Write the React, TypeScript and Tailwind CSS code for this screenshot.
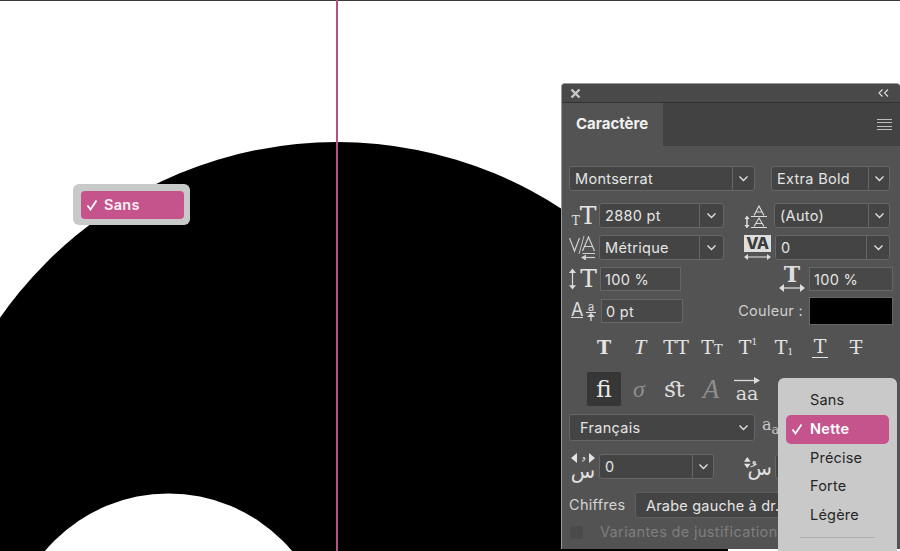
import React from 'react';

const FONT = { fontFamily: 'Inter, "Liberation Sans", Arial, sans-serif' };
const SERIF = { fontFamily: '"DejaVu Serif", "Liberation Serif", serif' };
const ITALIC = { fontFamily: '"Liberation Serif", serif' };
const ARABIC = { fontFamily: '"DejaVu Sans", sans-serif' };

const Chevron = () => (
  <svg width="11" height="7" viewBox="0 0 11 7" fill="none" stroke="#e0e0e0" strokeWidth="1.4">
    <path d="M1.5 1.5 5.5 5.5 9.5 1.5" />
  </svg>
);

const Check = () => (
  <svg width="12" height="12" viewBox="0 0 12 12" fill="none" stroke="#fff" strokeWidth="1.8">
    <path d="M1.5 6.5 4.5 10.5 10.5 1.5" />
  </svg>
);

const Combo = ({ value, width, arrow = 24 }: { value: string; width: number; arrow?: number }) => (
  <div
    className="flex h-[25px] shrink-0 rounded-[3px] border border-[#666] bg-[#444]"
    style={{ width }}
  >
    <div className="flex min-w-0 flex-1 items-center overflow-hidden whitespace-nowrap pl-[5px] pt-[1px] text-[14.5px] tracking-[0.3px] text-[#e4e4e4]">
      {value}
    </div>
    <div className="flex shrink-0 items-center justify-center border-l border-[#666]" style={{ width: arrow }}>
      <Chevron />
    </div>
  </div>
);

const Field = ({ value, width }: { value: string; width: number }) => (
  <div
    className="flex h-[24px] shrink-0 items-center border border-[#666] bg-[#484848] pl-[4px] pt-[1px] text-[14.5px] tracking-[0.3px] text-[#e4e4e4]"
    style={{ width }}
  >
    {value}
  </div>
);

const Glyph = ({ children, className = '' }: { children: React.ReactNode; className?: string }) => (
  <span style={SERIF} className={`flex w-[36px] justify-center text-[#e4e4e4] ${className}`}>
    {children}
  </span>
);

const IconSizeT = () => (
  <div style={SERIF} className="flex w-[28px] items-end justify-center leading-none text-[#e4e4e4]">
    <span className="text-[12px] leading-[12px]">T</span>
    <span className="text-[25px] leading-[22px]">T</span>
  </div>
);

const IconLeading = () => (
  <svg width="24" height="24" viewBox="0 0 24 24" fill="none" stroke="#dcdcdc" strokeWidth="1.1">
    <path d="M7 12.5h16M7 23.5h16" />
    <path d="M10 11.5 15 2l5 9.5M11.5 8h7M10 22.5 15 14l5 8.5M11.5 19.5h7" />
    <path d="M3 13v10" strokeWidth="1.5" />
    <path d="M.5 15 3 11.5 5.5 15M.5 21 3 24.5 5.5 21" fill="#dcdcdc" stroke="none" />
  </svg>
);

const IconKern = () => (
  <svg width="27" height="24" viewBox="0 0 27 24" fill="none" stroke="#d0d0d0">
    <path d="M.5 2 5.5 15 10.5 2" strokeWidth="1.2" />
    <path d="M10 18 15 0" strokeWidth=".9" />
    <path d="M13.5 15 19.5 1 25.5 15M15.5 10.5h8M13.5 17.5h12.5" strokeWidth="1.2" />
    <path d="M13 21.5h13" strokeWidth="1.2" />
    <path d="M12 21.5l5-3v6z" fill="#d0d0d0" stroke="none" />
  </svg>
);

const IconTrack = () => (
  <div className="flex w-[27px] flex-col items-center">
    <span className="flex h-[17px] w-[27px] items-center justify-center bg-[#dedede] text-[16px] font-extrabold leading-none tracking-[-0.5px] text-[#3c3c3c]">
      VA
    </span>
    <svg width="27" height="8" viewBox="0 0 27 8" fill="#dcdcdc" stroke="#dcdcdc" className="mt-[1px]">
      <path d="M2 4h23" strokeWidth="1.1" />
      <path d="M0 4l4-3v6zM27 4l-4-3v6z" stroke="none" />
    </svg>
  </div>
);

const IconScaleV = () => (
  <div className="flex w-[28px] items-center justify-between">
    <svg width="7" height="22" viewBox="0 0 8 24" fill="#dcdcdc" stroke="#dcdcdc">
      <path d="M4 3v18" strokeWidth="1.4" />
      <path d="M0 5 4 0l4 5zM0 19l4 5 4-5z" stroke="none" />
    </svg>
    <span style={SERIF} className="text-[25px] leading-[22px] text-[#e4e4e4]">T</span>
  </div>
);

const IconScaleH = () => (
  <div className="flex w-[26px] flex-col items-center">
    <span style={SERIF} className="text-[22px] font-bold leading-[17px] text-[#dedede]">T</span>
    <svg width="26" height="8" viewBox="0 0 26 8" fill="#dcdcdc" stroke="#dcdcdc" className="mt-[1px]">
      <path d="M2 4h22" strokeWidth="1.3" />
      <path d="M0 4l5-4v8zM26 4l-5-4v8z" stroke="none" />
    </svg>
  </div>
);

const IconBaseline = () => (
  <div className="flex w-[25px] items-start justify-between leading-none text-[#dcdcdc]">
    <span className="border-b border-[#dcdcdc] text-[18px] leading-[15px]">A</span>
    <div className="flex w-[10px] flex-col items-center">
      <span className="w-full border-b border-[#dcdcdc] text-center text-[11px] leading-[10px]">a</span>
      <svg width="8" height="8" viewBox="0 0 8 8" fill="#dcdcdc" stroke="#dcdcdc">
        <path d="M4 3v5" strokeWidth="1.3" />
        <path d="M0 4l4-4 4 4z" stroke="none" />
      </svg>
    </div>
  </div>
);

const IconArabicH = () => (
  <div className="flex w-[28px] flex-col items-center leading-none text-[#e2e2e2]">
    <svg width="24" height="10" viewBox="0 0 24 10" fill="#e2e2e2" stroke="#e2e2e2">
      <path d="M0 5l6-5v10zM24 5l-6-5v10z" stroke="none" />
      <path d="M11 8c3 0 3-2 3-3a1.2 1.2 0 0 0-2 0c0 1 1 1 2 1" fill="none" strokeWidth="1" />
    </svg>
    <span className="text-[20px] leading-[16px]" style={ARABIC}>س</span>
  </div>
);

const IconArabicV = () => (
  <div className="flex w-[28px] items-start leading-none text-[#e2e2e2]">
    <svg width="10" height="20" viewBox="0 0 10 20" fill="#e2e2e2">
      <path d="M0 8l5-7 5 7zM0 11l5 7 5-7z" />
    </svg>
    <span className="-ml-[3px] mt-[3px] text-[20px] leading-[24px]" style={ARABIC}>سُ</span>
  </div>
);

const MenuItem = ({ label, active = false }: { label: string; active?: boolean }) =>
  active ? (
    <div className="flex h-[29px] items-center rounded-[5px] bg-[#c5548d] pl-[5px] text-[14.5px] font-semibold tracking-[0.3px] text-white">
      <span className="flex w-[19px] items-center"><Check /></span>
      {label}
    </div>
  ) : (
    <div className="flex h-[28.5px] items-center pl-[24px] text-[14.5px] tracking-[0.2px] text-[#262626]">{label}</div>
  );

export default function App() {
  return (
    <div className="relative h-[551px] w-[900px] overflow-hidden bg-white" style={FONT}>
      {/* artwork: the letter bowl and the guide */}
      <svg className="absolute inset-0" width="900" height="551" viewBox="0 0 900 551">
        <circle cx="337" cy="553" r="411" fill="#000" />
        <circle cx="168.5" cy="655" r="161.5" fill="#fff" />
        <rect x="728" y="549" width="172" height="2" fill="#fff" />
        <rect x="0" y="0" width="900" height="1" fill="#3a3a3a" />
        <rect x="336" y="0" width="2" height="551" fill="#b5517f" />
      </svg>

      {/* Sans tag on the canvas */}
      <div className="absolute left-[73px] top-[184px] flex h-[41px] w-[117px] rounded-[6px] bg-[#c8caca] pb-[6px] pl-[8px] pr-[6px] pt-[7px]">
        <div className="flex flex-1 items-center rounded-[4px] bg-[#c5548d] pl-[5px] text-[14.5px] font-semibold tracking-[0.3px] text-[#fdf0f6]">
          <span className="flex w-[18px] items-center"><Check /></span>
          Sans
        </div>
      </div>

      {/* Caractère panel */}
      <div className="absolute left-[561px] top-[83px] flex h-[466px] w-[339px] flex-col overflow-hidden rounded-t-[4px] border-l border-t border-[#9a9a9a] bg-[#535353]">
        <div className="flex h-[19px] shrink-0 items-center justify-between border-b border-[#333] bg-[#494949] pl-[8px] pr-[11px]">
          <svg width="11" height="11" viewBox="0 0 11 11" stroke="#c8c8c8" strokeWidth="2.4">
            <path d="M1.5 1.5 9.5 9.5M9.5 1.5 1.5 9.5" />
          </svg>
          <svg width="11" height="8" viewBox="0 0 11 8" fill="none" stroke="#d8d8d8" strokeWidth="1.2">
            <path d="M4.5 .5 1 4l3.5 3.5M10 .5 6.5 4 10 7.5" />
          </svg>
        </div>
        <div className="flex h-[43px] shrink-0 bg-[#424242]">
          <div className="flex w-[101px] items-center bg-[#535353] pl-[14px] text-[15px] font-bold text-[#f0f0f0]">
            Caractère
          </div>
          <div className="flex flex-1 items-center justify-end pr-[8px]">
            <div className="flex h-[12px] w-[15px] flex-col justify-between">
              <span className="h-px bg-[#bdbdbd]" />
              <span className="h-px bg-[#bdbdbd]" />
              <span className="h-px bg-[#bdbdbd]" />
              <span className="h-px bg-[#bdbdbd]" />
            </div>
          </div>
        </div>

        <div className="flex flex-col pl-[7px]">
          <div className="mt-[20px] flex h-[25px] items-center gap-[16px]">
            <Combo value="Montserrat" width={186} arrow={22} />
            <Combo value="Extra Bold" width={119} arrow={21} />
          </div>
          <div className="mt-[12px] flex h-[25px] items-center">
            <div className="flex w-[30px] justify-start pl-[1px]"><IconSizeT /></div>
            <Combo value="2880 pt" width={125} />
            <div className="flex w-[50px] justify-end pr-[6px]"><IconLeading /></div>
            <Combo value="(Auto)" width={116} arrow={21} />
          </div>
          <div className="mt-[7px] flex h-[25px] items-center">
            <div className="flex w-[30px] justify-start"><IconKern /></div>
            <Combo value="Métrique" width={125} />
            <div className="flex w-[51px] justify-end pr-[4px]"><IconTrack /></div>
            <Combo value="0" width={115} arrow={23} />
          </div>
          <div className="mt-[7px] flex h-[24px] items-center">
            <div className="flex w-[31px] justify-start"><IconScaleV /></div>
            <Field value="100 %" width={81} />
            <div className="flex flex-1 justify-end pr-[4px]"><IconScaleH /></div>
            <Field value="100 %" width={84} />
            <div className="w-[7px]" />
          </div>
          <div className="mt-[6px] flex h-[28px] items-center">
            <div className="flex w-[32px] justify-start pl-[2px]"><IconBaseline /></div>
            <Field value="0 pt" width={82} />
            <span className="ml-auto text-[14.5px] tracking-[0.3px] text-[#cfcfcf]">Couleur :</span>
            <div className="ml-[6px] mr-[7px] h-[28px] w-[84px] border border-[#666] bg-black" />
          </div>

          {/* type style buttons */}
          <div className="mt-[9px] flex h-[26px] items-center pl-[17px] text-[19px] leading-none">
            <Glyph className="font-bold">T</Glyph>
            <Glyph><span style={ITALIC} className="text-[22px] italic">T</span></Glyph>
            <Glyph>TT</Glyph>
            <Glyph>T<span className="self-end pb-[1px] text-[13px]">T</span></Glyph>
            <Glyph>T<span className="text-[9px]">1</span></Glyph>
            <Glyph>T<span className="self-end text-[9px]">1</span></Glyph>
            <Glyph><span className="border-b border-[#e4e4e4] px-[2px] pb-[1px]">T</span></Glyph>
            <Glyph><span className="line-through">T</span></Glyph>
          </div>
          <div className="mt-[12px] flex h-[34px] items-center pl-[18px] text-[23px] leading-none">
            <div style={SERIF} className="flex h-[34px] w-[34px] items-center justify-center rounded-[2px] bg-[#363636] text-[#eaeaea]">ﬁ</div>
            <div style={ITALIC} className="flex w-[36px] justify-center text-[24px] italic text-[#8e8e8e]">σ</div>
            <div style={SERIF} className="flex w-[36px] justify-center text-[#dedede]">ﬆ</div>
            <div style={ITALIC} className="flex w-[36px] justify-center text-[27px] italic text-[#8e8e8e]">A</div>
            <div className="flex w-[36px] flex-col items-center">
              <svg width="26" height="7" viewBox="0 0 26 7" fill="#dedede" stroke="#dedede">
                <path d="M0 3.5h22" strokeWidth="1.3" />
                <path d="M26 3.5 20 0v7z" stroke="none" />
              </svg>
              <span style={SERIF} className="text-[19px] leading-[18px] text-[#dedede]">aa</span>
            </div>
          </div>

          <div className="mt-[8px] flex h-[27px] items-center">
            <div className="flex h-[27px] w-[186px] items-center justify-between rounded-[3px] border border-[#666] bg-[#444] pl-[10px] pr-[5px] text-[14.5px] tracking-[0.3px] text-[#e4e4e4]">
              Français
              <Chevron />
            </div>
            <span style={SERIF} className="ml-[7px] self-start pt-[3px] text-[16px] leading-none text-[#c8c8c8]">a</span>
            <span style={SERIF} className="self-start pt-[9px] text-[13px] leading-none text-[#c8c8c8]">a</span>
          </div>

          <div className="mt-[12px] flex h-[26px] items-center">
            <div className="flex w-[30px] justify-start"><IconArabicH /></div>
            <Combo value="0" width={115} arrow={21} />
            <div className="ml-[30px] w-[31px]"><IconArabicV /></div>
            <Combo value="" width={100} />
          </div>
          <div className="mt-[13px] flex h-[26px] items-center">
            <span className="w-[66px] text-[14.5px] tracking-[0.3px] text-[#d2d2d2]">Chiffres</span>
            <div className="flex h-[26px] w-[180px] items-center rounded-[3px] border border-[#5f5f5f] bg-[#444] pl-[10px] pt-[1px] text-[14.5px] tracking-[0.2px] text-[#e4e4e4] whitespace-nowrap">
              Arabe gauche à dr.
            </div>
          </div>
          <div className="mt-[5px] flex h-[18px] items-center">
            <div className="ml-[1px] h-[13px] w-[13px] rounded-[2px] border border-[#4c4c4c] bg-[#4a4a4a]" />
            <span className="ml-[17px] whitespace-nowrap text-[14.5px] tracking-[0.35px] text-[#7e7e7e]">Variantes de justification</span>
          </div>
        </div>
      </div>

      {/* anti-aliasing dropdown */}
      <div className="absolute left-[778px] top-[378px] h-[173px] w-[119px] rounded-t-[6px] bg-[#c9c9c9] pl-[8px] pr-[8px] pt-[8px]">
        <MenuItem label="Sans" />
        <MenuItem label="Nette" active />
        <MenuItem label="Précise" />
        <MenuItem label="Forte" />
        <MenuItem label="Légère" />
        <div className="mx-[14px] mt-[8px] h-px bg-[#aeaeae]" />
      </div>
    </div>
  );
}
